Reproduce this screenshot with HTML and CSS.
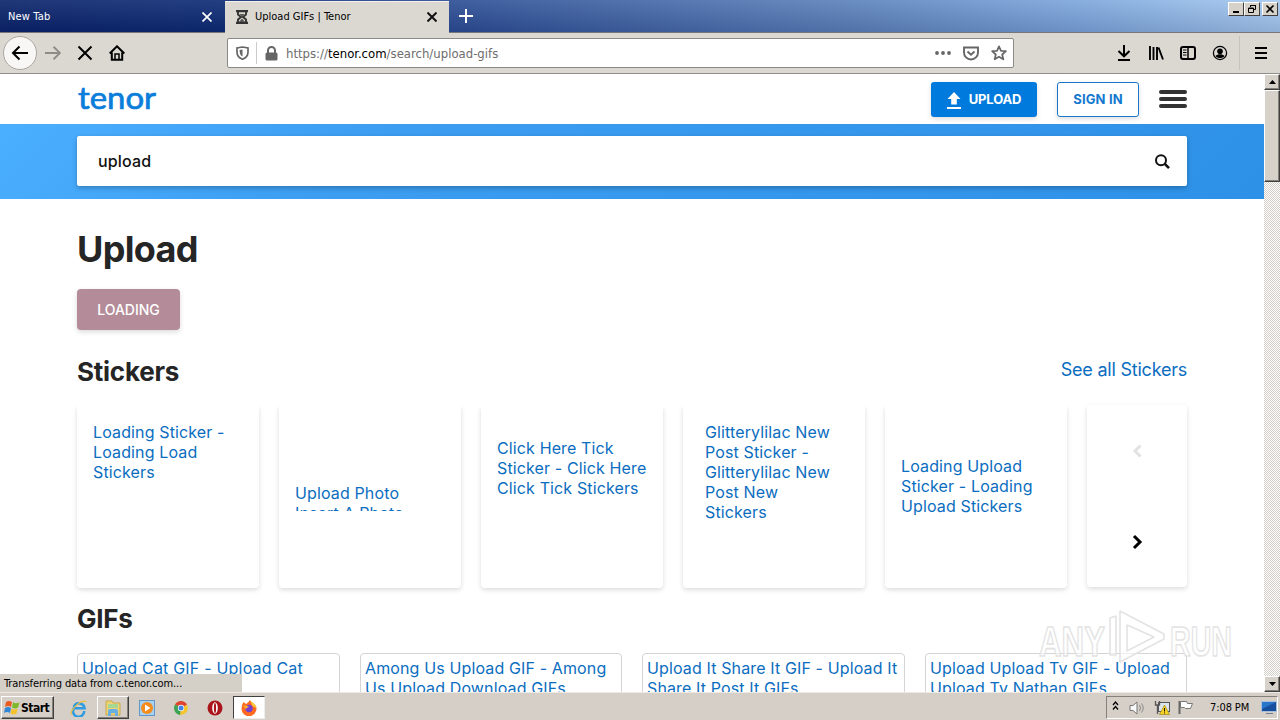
FILE: index.html
```html
<!DOCTYPE html>
<html lang="en">
<head>
<meta charset="utf-8">
<title>Upload GIFs | Tenor</title>
<link rel="stylesheet" href="styles.css">
</head>
<body>
<div class="desktop">
  <header class="tabs">
    <div class="tab tab-idle"><span class="tab-new">New Tab</span>
      <svg class="close" width="10" height="10" viewBox="0 0 10 10"><path d="M.5.5l9 9M9.500.5l-9 9" stroke="#fff" stroke-width="1.700"/></svg></div>
    <div class="tab tab-active">
      <svg width="14" height="14" viewBox="0 0 14 14"><path d="M1 1.200h12M1 12.800h12" stroke="#333" stroke-width="2.200"/><path d="M3 2v2.500L6 7 3 9.500V12M11 2v2.500L8 7l3 2.500V12" fill="none" stroke="#333" stroke-width="1.900"/><path d="M4.500 4h5L7 6.500zM7 8.500l3 3.500H4z" fill="#555"/></svg>
      <span class="tab-title">Upload GIFs | Tenor</span>
      <svg class="close" width="10" height="10" viewBox="0 0 10 10"><path d="M.5.5l9 9M9.500.5l-9 9" stroke="#111" stroke-width="2"/></svg></div>
    <svg class="plus" width="14" height="14" viewBox="0 0 14 14"><path d="M7 0v14M0 7h14" stroke="#fff" stroke-width="2"/></svg>
    <div class="window-buttons">
      <span class="wb"><svg width="14" height="12"><path d="M4 9h6" stroke="#000" stroke-width="2"/></svg></span>
      <span class="wb"><svg width="14" height="12"><path d="M5.500 4V2.500h5v4H9M5 2.500h6" fill="none" stroke="#000"/><path d="M3.500 5h5v4.500h-5zM3 5.500h6" fill="none" stroke="#000"/></svg></span>
      <span class="wb wb-close"><svg width="14" height="12"><path d="M3.500 2.500l7 7M10.500 2.500l-7 7" stroke="#000" stroke-width="1.600"/></svg></span>
    </div>
  </header>

  <nav class="toolbar">
    <div class="nav-left">
      <span class="back"><svg width="18" height="16" viewBox="0 0 18 16"><path d="M17 8H2M8.500 1.500L2 8l6.500 6.500" fill="none" stroke="#000" stroke-width="2"/></svg></span>
      <svg width="16" height="14" viewBox="0 0 16 14"><path d="M0 7h15M8.500.8L15 7l-6.500 6.200" fill="none" stroke="#8f8c88" stroke-width="1.900"/></svg>
      <svg width="16" height="16" viewBox="0 0 16 16"><path d="M1.500 1.500l13 13M14.500 1.500l-13 13" stroke="#000" stroke-width="2"/></svg>
      <svg width="16" height="16" viewBox="0 0 16 16"><path d="M.7 8.500L8 1.300l7.300 7.200M2.800 7.500v7.300h10.400V7.500" fill="none" stroke="#000" stroke-width="2"/><path d="M6 15V9h4v6" fill="none" stroke="#000" stroke-width="1.500"/></svg>
    </div>
    <div class="urlbar">
      <svg width="13" height="14" viewBox="0 0 13 14"><path d="M6.500 1L12 2v4c0 3.500-2 6-5.500 7.200C3 12 1 9.500 1 6V2z" fill="none" stroke="#666" stroke-width="1.700"/><path d="M6.500 3.500v7C4.500 9.500 3.700 8 3.600 4z" fill="#666"/></svg>
      <span class="url-divider"></span>
      <svg width="13" height="15" viewBox="0 0 13 15"><rect x=".5" y="6.500" width="12" height="8" rx="1.500" fill="#666"/><path d="M3 8V4.500a3.500 3.500 0 017 0V8" fill="none" stroke="#666" stroke-width="2"/></svg>
      <span class="url">https://<b>tenor.com</b>/search/upload-gifs</span>
      <svg class="dots" width="16" height="4"><circle cx="2" cy="2" r="1.900"/><circle cx="8" cy="2" r="1.900"/><circle cx="14" cy="2" r="1.900"/></svg>
      <svg width="16" height="15" viewBox="0 0 16 15"><path d="M1 1.500h14v5a7 7 0 01-14 0z" fill="none" stroke="#666" stroke-width="1.900"/><path d="M4.500 5.500L8 8.700l3.500-3.200" fill="none" stroke="#666" stroke-width="1.900"/></svg>
      <svg width="16" height="16" viewBox="0 0 16 16"><path d="M8 1.300l2 4.500 4.900.4-3.700 3.300 1.100 4.800L8 11.800l-4.300 2.500 1.100-4.800L1.100 6.200 6 5.800z" fill="none" stroke="#666" stroke-width="1.700" stroke-linejoin="round"/></svg>
    </div>
    <div class="nav-right">
      <svg width="16" height="16" viewBox="0 0 16 16"><path d="M8 0v11M2.500 6L8 11.300 13.500 6M2 15h12" fill="none" stroke="#000" stroke-width="2"/></svg>
      <svg width="16" height="16" viewBox="0 0 16 16"><path d="M2 1v14M5.500 2v13M9 2v13M10.500 2.500L15 14.500" fill="none" stroke="#000" stroke-width="1.900"/></svg>
      <svg width="16" height="16" viewBox="0 0 16 16"><rect x="1" y="2" width="14" height="12" rx="2" fill="none" stroke="#000" stroke-width="2"/><path d="M8 2v12" stroke="#000" stroke-width="1.500"/><path d="M3 5h3.500M3 7.500h3.500M3 10h3.500" stroke="#000"/></svg>
      <svg width="16" height="16" viewBox="0 0 16 16"><circle cx="8" cy="8" r="6.600" fill="none" stroke="#000" stroke-width="1.200"/><circle cx="8" cy="6.200" r="2.800"/><path d="M3.500 11c2-2.200 7-2.200 9 0-1.800 2.700-7.200 2.700-9 0z"/></svg>
      <span class="menu-divider"></span>
      <svg width="12" height="12"><path d="M0 1h12M0 6h12M0 11h12" stroke="#000" stroke-width="2"/></svg>
    </div>
  </nav>

  <div class="viewport">
    <main class="page">
      <div class="site-header">
        <svg class="logo" width="80" height="40"><text x="1" y="30" textLength="78" lengthAdjust="spacingAndGlyphs">tenor</text></svg>
        <div class="actions">
          <span class="btn btn-upload"><svg width="14" height="17" viewBox="0 0 14 17"><path d="M7 0l6.500 7H9.800v5.500H4.200V7H.5zM0 15h14v2H0z" fill="#fff"/></svg><span>UPLOAD</span></span>
          <span class="btn btn-signin"><span>SIGN IN</span></span>
          <svg width="28" height="18"><path d="M2 2h24M2 9h24M2 16h24" stroke="#333" stroke-width="4" stroke-linecap="round"/></svg>
        </div>
      </div>
      <div class="search-band">
        <div class="search"><span>upload</span><svg width="17" height="17" viewBox="0 0 17 17"><circle cx="7" cy="7.200" r="5" fill="none" stroke="#111" stroke-width="2"/><path d="M10.500 10.700l4.500 4.500" stroke="#111" stroke-width="2.600"/></svg></div>
      </div>
      <div class="content">
        <h1><span>Upload</span></h1>
        <span class="tag"><span>LOADING</span></span>
        <div class="section-head"><h2>Stickers</h2><a class="see-all">See all Stickers</a></div>
        <div class="stickers">
          <div class="card"><a>Loading Sticker -<br>Loading Load<br>Stickers</a></div>
          <div class="card card-photo"><a class="cut">Upload Photo<br>Insert A Photo</a></div>
          <div class="card card-click"><a>Click Here Tick<br>Sticker - Click Here<br>Click Tick Stickers</a></div>
          <div class="card card-lilac"><a>Glitterylilac New<br>Post Sticker -<br>Glitterylilac New<br>Post New<br>Stickers</a></div>
          <div class="card card-loading"><a>Loading Upload<br>Sticker - Loading<br>Upload Stickers</a></div>
          <div class="card pager">
            <svg width="12" height="16" viewBox="0 0 12 16"><path d="M9.500 2.500L4 8 9.500 13.500" fill="none" stroke="#e2e2e2" stroke-width="3"/></svg>
            <svg width="12" height="16" viewBox="0 0 12 16"><path d="M3 2L9 8 3 14" fill="none" stroke="#000" stroke-width="3"/></svg>
          </div>
        </div>
        <h2 class="gifs-title">GIFs</h2>
        <div class="gifs">
          <a class="gif">Upload Cat GIF - Upload Cat</a>
          <a class="gif">Among Us Upload GIF - Among<br>Us Upload Download GIFs</a>
          <a class="gif">Upload It Share It GIF - Upload It<br>Share It Post It GIFs</a>
          <a class="gif">Upload Upload Tv GIF - Upload<br>Upload Tv Nathan GIFs</a>
        </div>
      </div>
    </main>
    <aside class="scrollbar">
      <span class="sb-btn"><svg width="7" height="4"><path d="M0 4h7L3.500 0z"/></svg></span>
      <span class="sb-thumb"></span>
      <span class="sb-btn sb-down"><svg width="7" height="4"><path d="M0 0h7L3.500 4z"/></svg></span>
    </aside>
    <div class="status"><span>Transferring data from c.tenor.com...</span></div>
    <svg class="watermark" width="200" height="58" viewBox="0 0 200 58">
      <g fill="#fff" fill-opacity=".55" stroke="#e3e3e3" stroke-width="1.600" stroke-linejoin="round">
        <text x="3" y="47" textLength="66" lengthAdjust="spacingAndGlyphs">ANY</text>
        <text x="134" y="47" textLength="62" lengthAdjust="spacingAndGlyphs">RUN</text>
        <path d="M74 9l6-2v39h-6zM84 2l44 23v5L84 53zM91 16v26l27-14z" fill-rule="evenodd"/>
      </g>
    </svg>
  </div>

  <footer class="taskbar">
    <div class="start"><svg width="16" height="15" viewBox="0 0 16 15"><path d="M2 2c2-1.500 4-1.500 6 0L7 7C5 5.500 3 5.700 1 7z" fill="#e95b22"/><path d="M9 2.300c2 1.300 4 1.200 6.500 0L14 7.500c-2 1.200-4 1.200-6 0z" fill="#7db928"/><path d="M1 8c2-1.400 4-1.400 6 0l-1 5C4 11.600 2 11.600 0 13z" fill="#3187d8"/><path d="M7.700 8.500c2 1.300 4 1.200 6 0l-1.200 5c-2 1.200-4 1.200-6 0z" fill="#f6c22c"/></svg><b>Start</b></div>
    <div class="apps">
      <span class="app"><svg width="18" height="18" viewBox="0 0 18 18"><path d="M14.200 12A5.600 5.600 0 113.800 9.300h10.800A5.600 5.600 0 003.800 8" fill="none" stroke="#2f9be0" stroke-width="2.500"/><path d="M1.500 15.500C0 11 11 0 16.500 2.500" fill="none" stroke="#e9bf3b" stroke-width="1.300"/></svg></span>
      <span class="app app-open"><svg width="18" height="18" viewBox="0 0 18 18"><path d="M2 2h6l1 2h7v12H2z" fill="#efd477" stroke="#c9a94a"/><path d="M4 5h10v4H4z" fill="#a6d894"/><path d="M4 17v-5a2 2 0 012-2h6a2 2 0 012 2v5h-3v-3H7v3z" fill="#69aee3"/></svg></span>
      <span class="app"><svg width="16" height="16"><rect x=".5" y=".5" width="15" height="15" fill="#a9d2f0" stroke="#6096c8"/><circle cx="8" cy="8" r="6" fill="#f38b1d"/><path d="M6 4.500v7L11.500 8z" fill="#fff"/></svg></span>
      <span class="app"><svg width="14" height="14" viewBox="0 0 14 14"><circle cx="7" cy="7" r="6.800" fill="#f4c62c"/><path d="M7 7L1 3.500a7 7 0 0112 0z" fill="#dc4434"/><path d="M7 7L6 14A7 7 0 011 3.500z" fill="#3ba355"/><circle cx="7" cy="7" r="3.200" fill="#fff"/><circle cx="7" cy="7" r="2.500" fill="#4285e8"/></svg></span>
      <span class="app"><svg width="16" height="16"><circle cx="8" cy="8" r="7.500" fill="#a9151b"/><ellipse cx="8" cy="8" rx="2.800" ry="5.800" fill="#fff"/><ellipse cx="8" cy="8" rx="1.100" ry="5" fill="#a9151b"/></svg></span>
      <span class="app app-pressed"><svg width="16" height="16" viewBox="0 0 16 16"><path d="M1 5l1.500-3L5 4c2-1 3-3 4-4 1 3 6 3 6.500 8.500A7.500 7.500 0 01.5 9z" fill="#ff6b20"/><path d="M9 0c1 3 6 3 6.500 8l-4-2z" fill="#ffce3c"/><circle cx="8" cy="8.500" r="3.700" fill="#7442cf"/><path d="M2 6c3-1 5 0 6 1-2 0-2 1-3 2z" fill="#ffac2e"/></svg></span>
    </div>
    <div class="tray">
      <svg width="7" height="10"><path d="M1 4l2.500-3L6 4M1 8.500l2.500-3 2.500 3" fill="none" stroke="#000" stroke-width="1.300"/></svg>
      <svg width="17" height="14" viewBox="0 0 17 14"><path d="M1 4.500h3l4-3.500v12L4 9.500H1z" fill="#f7f7f7" stroke="#777"/><path d="M10.500 4q2 3 0 6M12.500 2.500q3.500 4.500 0 9" fill="none" stroke="#888"/></svg>
      <svg width="17" height="15" viewBox="0 0 17 15"><rect x="4.500" y="2.500" width="11" height="9" fill="#dce4ec" stroke="#555"/><path d="M1.500 1v4h4V1M3.500 5v9" fill="none" stroke="#555" stroke-width="1.300"/><path d="M10.500 5l5 9.500h-10z" fill="#f8d323" stroke="#a28a13" stroke-width=".7"/><path d="M10.500 8v3.500M10.500 12.500v1" stroke="#111"/></svg>
      <svg width="17" height="15" viewBox="0 0 17 15"><path d="M2.500 1v13" stroke="#666" stroke-width="2"/><path d="M3.500 1.500h6l1 2h5l-2 5h-5l-1-1h-4z" fill="#fff" stroke="#777"/></svg>
      <span class="clock">7:08 PM</span>
      <svg width="16" height="13"><rect x=".5" y=".5" width="15" height="10" fill="#2876cb" stroke="#a9bfd8"/><path d="M1 8L15 1v9H1z" fill="#174f9e"/><path d="M5 12.500h7" stroke="#6c7f93"/></svg>
    </div>
  </footer>
</div>
</body>
</html>
```
FILE: styles.css
```css
* { box-sizing: border-box; }
body { margin: 0; overflow: hidden; }
svg { display: block; flex: none; }
.desktop { width: 1280px; height: 720px; display: flex; flex-direction: column; background: #fff; font: 11px "DejaVu Sans Condensed", "DejaVu Sans", sans-serif; font-stretch: condensed; color: #000; white-space: nowrap; }

.tabs { height: 33px; flex: none; display: flex; align-items: stretch; border-bottom: 1px solid #77777b; background: linear-gradient(to bottom, rgba(255,255,255,.09), rgba(0,0,40,.13)), linear-gradient(90deg, #0a246a 0, #0e2c75 224px, #2c4e94 450px, #5c82bb 850px, #7da7dc 1080px, #a6caf0 1280px); }
.tab { display: flex; align-items: center; }
.tab-idle { width: 225px; padding: 1px 13px 0 8px; color: #fff; }
.tab-new { letter-spacing: .15px; }
.tab-active { width: 224px; height: 32px; margin-top: 1px; padding: 0 12px 2px 10px; background: #dbd8d2; border-top: 1px solid #f3f1ed; gap: 6px; }
.close { margin-left: auto; }
.plus { margin: 9px 0 0 10px; }
.window-buttons { margin: 2px 2px 0 auto; display: flex; height: 14px; }
.wb { width: 16px; height: 14px; background: #d6d1c9; border: 1px solid; border-color: #fff #404040 #404040 #fff; }
.wb-close { margin-left: 2px; }

.toolbar { height: 41px; flex: none; background: #dbd8d2; border-bottom: 1px solid #8f8e8b; display: flex; align-items: center; }
.nav-left { width: 227px; padding-left: 3px; display: flex; align-items: center; gap: 16px; }
.back { width: 34px; height: 34px; margin-right: -8px; border: 1px solid #aaa7a1; border-radius: 50%; background: #f8f7f5; display: flex; align-items: center; justify-content: center; }
.urlbar { width: 787px; height: 30px; background: #fff; border: 1px solid #8c8a87; border-radius: 2px; display: flex; align-items: center; padding: 0 6px 0 8px; }
.url-divider { width: 1px; height: 22px; background: #ccc; margin: 0 8px 0 7px; }
.url { margin-left: 8px; font: 13px "DejaVu Sans Condensed", "DejaVu Sans", sans-serif; font-stretch: condensed; color: #6d6d6d; letter-spacing: 0; }
.url b { color: #000; font-weight: normal; }
.dots { margin-left: auto; fill: #666; }
.urlbar .dots + svg { margin: 0 12px; }
.nav-right { margin-left: auto; padding-right: 13px; display: flex; align-items: center; gap: 16px; }
.menu-divider { width: 1px; height: 34px; background: #c6c3bd; margin: 0 -1px 0 -5px; }

.viewport { position: relative; flex: 1; min-height: 0; overflow: hidden; display: flex; background: #fff; }
.page { width: 1264px; font-family: Inter, sans-serif; font-size: 16px; line-height: 20px; color: #222; }
.site-header { height: 50px; padding: 0 77px; display: flex; align-items: center; justify-content: space-between; }
.logo text { font: 31px Lato, sans-serif; fill: #0b7dda; stroke: #0b7dda; stroke-width: .7px; }
.actions { display: flex; align-items: center; gap: 20px; }
.btn { height: 35px; border-radius: 3px; display: flex; align-items: center; justify-content: center; font-size: 13px; font-weight: 700; box-shadow: 0 2px 5px rgba(0,0,0,.13); }
.btn-upload { width: 106px; background: #007add; color: #fff; gap: 8px; letter-spacing: -.15px; }
.btn-upload svg { margin-top: 3px; }
.btn-signin { width: 82px; border: 1px solid #1976c9; color: #1478cf; background: #fff; letter-spacing: .15px; }
.search-band { height: 75px; padding: 12px 77px 13px; background: linear-gradient(135deg, #4bafff 0, #3c9df1 30%, #2d91e7 100%); }
.search { height: 50px; background: #fff; border-radius: 2px; display: flex; align-items: center; justify-content: space-between; padding: 0 16px 0 21px; font-weight: 500; letter-spacing: .15px; color: #111; box-shadow: 0 2px 5px rgba(0,0,0,.25); }
.content { padding: 0 77px; }
h1, h2 { margin: 0; color: #252525; font-weight: 700; }
h1 { margin-top: 28px; font-size: 36px; line-height: 44px; letter-spacing: -.7px; }
.tag { display: flex; width: 103px; height: 41px; margin-top: 18px; align-items: center; justify-content: center; background: #b48c99; color: #fff; border-radius: 4px; font-size: 14px; font-weight: 500; box-shadow: 0 2px 5px rgba(0,0,0,.15); }
.section-head { height: 30px; margin-top: 27px; display: flex; justify-content: space-between; align-items: center; }
h2 { font-size: 26px; line-height: 30px; letter-spacing: -.25px; }
a { color: #0b6dc0; letter-spacing: .13px; }
.see-all { font-size: 18px; margin-top: -4px; letter-spacing: -.22px; }
.stickers { display: flex; gap: 20px; height: 184px; margin-top: 18px; }
.card { width: 182px; height: 183px; padding: 17px 16px 0; border-radius: 4px; box-shadow: 0 2px 5px rgba(0,0,0,.14); clip-path: inset(2px -10px -10px -10px); }
.card-photo { padding-top: 78px; }
.card-click { padding-top: 33px; }
.card-lilac { padding-left: 22px; }
.card-loading { padding-top: 51px; }
.card a { display: block; }
.card .cut { height: 28px; overflow: hidden; }
.pager { width: 100px; height: 182px; display: flex; flex-direction: column; align-items: center; padding: 38px 0 37px; justify-content: space-between; clip-path: none; }
.gifs-title { margin-top: 15px; }
.gifs { margin-top: 19px; display: grid; grid-template-columns: 263px 262px 263px 262px; gap: 20px; }
.gif { height: 100px; border: 1px solid #d4d4d4; border-radius: 4px; padding: 4px; overflow: hidden; }
.gif:first-child { letter-spacing: .2px; }

.scrollbar { width: 16px; display: flex; flex-direction: column; background: repeating-conic-gradient(#fff 0 25%, #d4d0c8 0 50%) 0 0 / 2px 2px; }
.sb-btn, .sb-thumb { background: #d6d1c9; border: 1px solid; border-color: #fff #404040 #404040 #fff; box-shadow: inset -1px -1px #858179; }
.sb-btn { height: 16px; display: flex; align-items: center; justify-content: center; }
.sb-thumb { height: 92px; }
.sb-down { margin-top: auto; margin-bottom: 0; }
.status { position: absolute; left: 0; bottom: 0; width: 242px; height: 18px; padding: 1px 0 0 4px; background: #d4cfc7; display: flex; align-items: center; letter-spacing: -.08px; }
.watermark { position: absolute; left: 1036px; top: 535px; }
.watermark text { font: 700 43px "Liberation Sans", sans-serif; }

.taskbar { height: 28px; flex: none; background: #d6cfc7; border-top: 1px solid #eee9e3; display: flex; align-items: center; padding: 2px 1px 0; box-shadow: 0 -1px #d4d0c8; }
.start { width: 53px; height: 23px; margin-right: 9px; border: 1px solid; border-color: #fff #404040 #404040 #fff; box-shadow: inset -1px -1px #858179; display: flex; align-items: center; padding-left: 2px; gap: 1px; }
.start b { font-size: 12px; letter-spacing: -.5px; }
.apps { display: flex; gap: 2px; }
.app { width: 32px; height: 23px; display: flex; align-items: center; justify-content: center; }
.app-open { border: 1px solid; border-color: #fff #404040 #404040 #fff; box-shadow: inset -1px -1px #858179; }
.app-pressed { background: #fff; border: 1px solid; border-color: #404040 #eee #eee #404040; }
.tray { width: 172px; height: 23px; margin-left: auto; margin-right: 1px; border: 1px solid; border-color: #85817a #fff #fff #85817a; display: flex; align-items: center; padding: 0 0 0 5px; gap: 8px; }
.tray > svg:first-child { margin-right: 2px; margin-top: -4px; }
.tray > svg:nth-child(4) { margin-left: -2px; }
.clock { margin-left: 8px; margin-right: auto; letter-spacing: -.1px; }
```
